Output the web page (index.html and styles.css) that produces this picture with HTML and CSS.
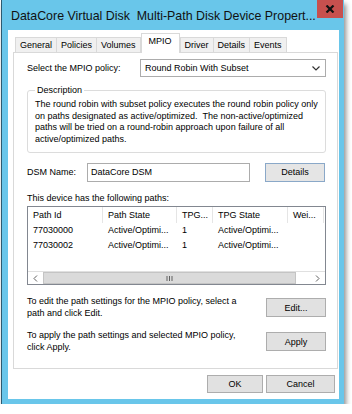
FILE: index.html
```html
<!DOCTYPE html>
<html lang="en">
<head>
  <meta charset="UTF-8">
  <title>DataCore Virtual Disk Multi-Path Disk Device Properties</title>
  <link rel="stylesheet" href="styles.css">
</head>
<body>
  <div class="window">
    <div class="titlebar">
      <span class="title">DataCore Virtual Disk&nbsp; Multi-Path Disk Device Propert...</span>
      <div class="close">
        <svg width="10" height="8" viewBox="0 0 10 8"><path d="M1.5 0.5 L8.5 7.5 M8.5 0.5 L1.5 7.5" stroke="#111" stroke-width="2.2"/></svg>
      </div>
    </div>

    <div class="client">
      <!-- Tab strip -->
      <div class="tabs">
        <div class="tab">General</div>
        <div class="tab">Policies</div>
        <div class="tab">Volumes</div>
        <div class="tab active">MPIO</div>
        <div class="tab">Driver</div>
        <div class="tab">Details</div>
        <div class="tab">Events</div>
      </div>

      <div class="panel">
        <div class="row policy-row">
          <span class="label">Select the MPIO policy:</span>
          <div class="combo">
            <span>Round Robin With Subset</span>
            <svg width="8" height="5" viewBox="0 0 8 5"><path d="M0.5 0.5 L4 4 L7.5 0.5" fill="none" stroke="#333" stroke-width="1.2"/></svg>
          </div>
        </div>

        <fieldset class="group">
          <legend>Description</legend>
          <p>The round robin with subset policy executes the round robin policy only on paths designated as active/optimized.&nbsp; The non-active/optimized paths will be tried on a round-robin approach upon failure of all active/optimized paths.</p>
        </fieldset>

        <div class="row dsm-row">
          <span class="label dsm-label">DSM Name:</span>
          <div class="textbox">DataCore DSM</div>
          <button class="btn">Details</button>
        </div>

        <div class="paths-label">This device has the following paths:</div>

        <div class="listview">
          <div class="lv-head">
            <div class="col c1">Path Id</div>
            <div class="col c2">Path State</div>
            <div class="col c3">TPG...</div>
            <div class="col c4">TPG State</div>
            <div class="col c5">Wei...</div>
          </div>
          <div class="lv-body">
            <div class="lv-row">
              <div class="col c1">77030000</div>
              <div class="col c2">Active/Optimi...</div>
              <div class="col c3">1</div>
              <div class="col c4">Active/Optimi...</div>
            </div>
            <div class="lv-row">
              <div class="col c1">77030002</div>
              <div class="col c2">Active/Optimi...</div>
              <div class="col c3">1</div>
              <div class="col c4">Active/Optimi...</div>
            </div>
          </div>
          <div class="hscroll">
            <div class="arrow">
              <svg width="5" height="7" viewBox="0 0 5 7"><path d="M4 0.5 L1 3.5 L4 6.5" fill="none" stroke="#606060" stroke-width="1"/></svg>
            </div>
            <div class="thumb">
              <svg width="7" height="5" viewBox="0 0 7 5"><path d="M1 0 V5 M3.5 0 V5 M6 0 V5" stroke="#606060" stroke-width="1"/></svg>
            </div>
            <div class="track"></div>
            <div class="arrow">
              <svg width="5" height="7" viewBox="0 0 5 7"><path d="M1 0.5 L4 3.5 L1 6.5" fill="none" stroke="#606060" stroke-width="1"/></svg>
            </div>
          </div>
        </div>

        <div class="row action-row">
          <p class="hint">To edit the path settings for the MPIO policy, select a path and click Edit.</p>
          <button class="btn">Edit...</button>
        </div>

        <div class="row action-row">
          <p class="hint">To apply the path settings and selected MPIO policy, click Apply.</p>
          <button class="btn">Apply</button>
        </div>
      </div>

      <div class="footer">
        <button class="btn ok">OK</button>
        <button class="btn cancel">Cancel</button>
      </div>
    </div>
  </div>
</body>
</html>
```

FILE: styles.css
```css
body {
  margin: 0;
  background: #ffffff;
  font-family: "Liberation Sans", Arial, sans-serif;
  font-size: 9px;
  color: #000000;
}
.window {
  margin-left: 1px;
  width: 343px;
  height: 404px;
  background-color: #69c6ea;
  border-left: 1px solid #2c5a70;
  box-sizing: border-box;
  box-shadow: 2px 4px 5px rgba(0, 0, 0, 0.45);
  display: flex;
  flex-direction: column;
}
.titlebar {
  height: 30px;
  display: flex;
  justify-content: space-between;
  align-items: flex-start;
}
.title {
  font-size: 12.4px;
  color: #111111;
  margin: 9px 0 0 9px;
  white-space: nowrap;
  overflow: hidden;
}
.close {
  flex-shrink: 0;
  width: 26px;
  height: 18px;
  margin-right: 1px;
  background-color: #c7504e;
  display: flex;
  align-items: center;
  justify-content: center;
}
.client {
  flex: 1;
  margin: 0 5px 5px 6px;
  background-color: #ffffff;
  display: flex;
  flex-direction: column;
}
.tabs {
  display: flex;
  height: 22px;
  align-items: flex-end;
  padding-left: 7px;
  position: relative;
  z-index: 1;
}
.tab {
  height: 15px;
  line-height: 14px;
  padding: 0 4px;
  border: 1px solid #d9d9d9;
  border-bottom: none;
  margin-right: -1px;
  background-color: #f0f0f0;
  box-sizing: border-box;
  color: #000;
}
.tab.active {
  height: 20px;
  line-height: 14px;
  margin-bottom: -1px;
  padding: 0 7px;
  background-color: #ffffff;
  margin-left: 1px;
  margin-right: 0;
}
.panel {
  margin-left: 5px;
  width: 325px;
  height: 317px;
  border: 1px solid #d9d9d9;
  box-sizing: border-box;
  padding: 6px 11px 0 13px;
  display: flex;
  flex-direction: column;
}
.row {
  display: flex;
  align-items: center;
}
.policy-row {
  height: 18px;
}
.label {
  width: 113px;
}
.combo {
  flex: 1;
  height: 18px;
  border: 1px solid #acacac;
  box-sizing: border-box;
  display: flex;
  align-items: center;
  justify-content: space-between;
  padding: 0 5px 0 4px;
}
.group {
  margin: 8px 0 0 0;
  padding: 4px 7px 8px 7px;
  height: 68px;
  box-sizing: border-box;
  border: 1px solid #dcdcdc;
  border-radius: 3px;
}
.group legend {
  padding: 0 2px;
  line-height: 10px;
}
.group p {
  margin: 0;
  line-height: 11.7px;
}
.dsm-row {
  margin-top: 9px;
  height: 20px;
}
.dsm-label {
  width: 60px;
}
.textbox {
  width: 163px;
  height: 19px;
  border: 1px solid #acacac;
  box-sizing: border-box;
  padding: 2px 3px;
  line-height: 13px;
  margin-right: 15px;
}
.btn {
  font-family: inherit;
  font-size: 9px;
  width: 60px;
  height: 19px;
  background-color: #e1e1e1;
  border: 1px solid #adadad;
  color: #000;
  padding: 0;
}
.dsm-row .btn {
  background-color: #e5e5e5;
  border-color: #8aa8c8;
}
.paths-label {
  margin-top: 11px;
  line-height: 11px;
}
.listview {
  margin-top: 2px;
  height: 79px;
  border: 1px solid #828790;
  box-sizing: border-box;
  display: flex;
  flex-direction: column;
}
.lv-head,
.lv-row {
  display: flex;
}
.lv-head {
  height: 16px;
  align-items: center;
}
.lv-head .col {
  border-right: 1px solid #e5e5e5;
  height: 16px;
  line-height: 16px;
}
.col {
  box-sizing: border-box;
  padding-left: 5px;
  white-space: nowrap;
  overflow: hidden;
}
.c1 { width: 75px; }
.c2 { width: 74px; }
.c3 { width: 36px; }
.c4 { width: 75px; }
.c5 { width: 36px; }
.lv-body {
  flex: 1;
}
.lv-row {
  height: 15px;
  line-height: 15px;
}
.hscroll {
  height: 13px;
  display: flex;
  background-color: #f0f0f0;
  border-top: 1px solid #e0e0e0;
  box-sizing: border-box;
}
.arrow {
  width: 15px;
  display: flex;
  align-items: center;
  justify-content: center;
  background-color: #ffffff;
}
.thumb {
  width: 253px;
  background-color: #dadada;
  border: 1px solid #c4c4c4;
  box-sizing: border-box;
  display: flex;
  align-items: center;
  justify-content: center;
}
.track {
  flex: 1;
  background-color: #ffffff;
}
.action-row {
  justify-content: space-between;
  margin-top: 11px;
}
.hint {
  margin: 0;
  width: 220px;
  line-height: 11.5px;
}
.footer {
  display: flex;
  justify-content: flex-end;
  padding: 6px 4px 0 0;
}
.footer .btn {
  height: 18px;
}
.ok {
  width: 56px;
  margin-right: 3px;
}
.cancel {
  width: 69px;
}
```
